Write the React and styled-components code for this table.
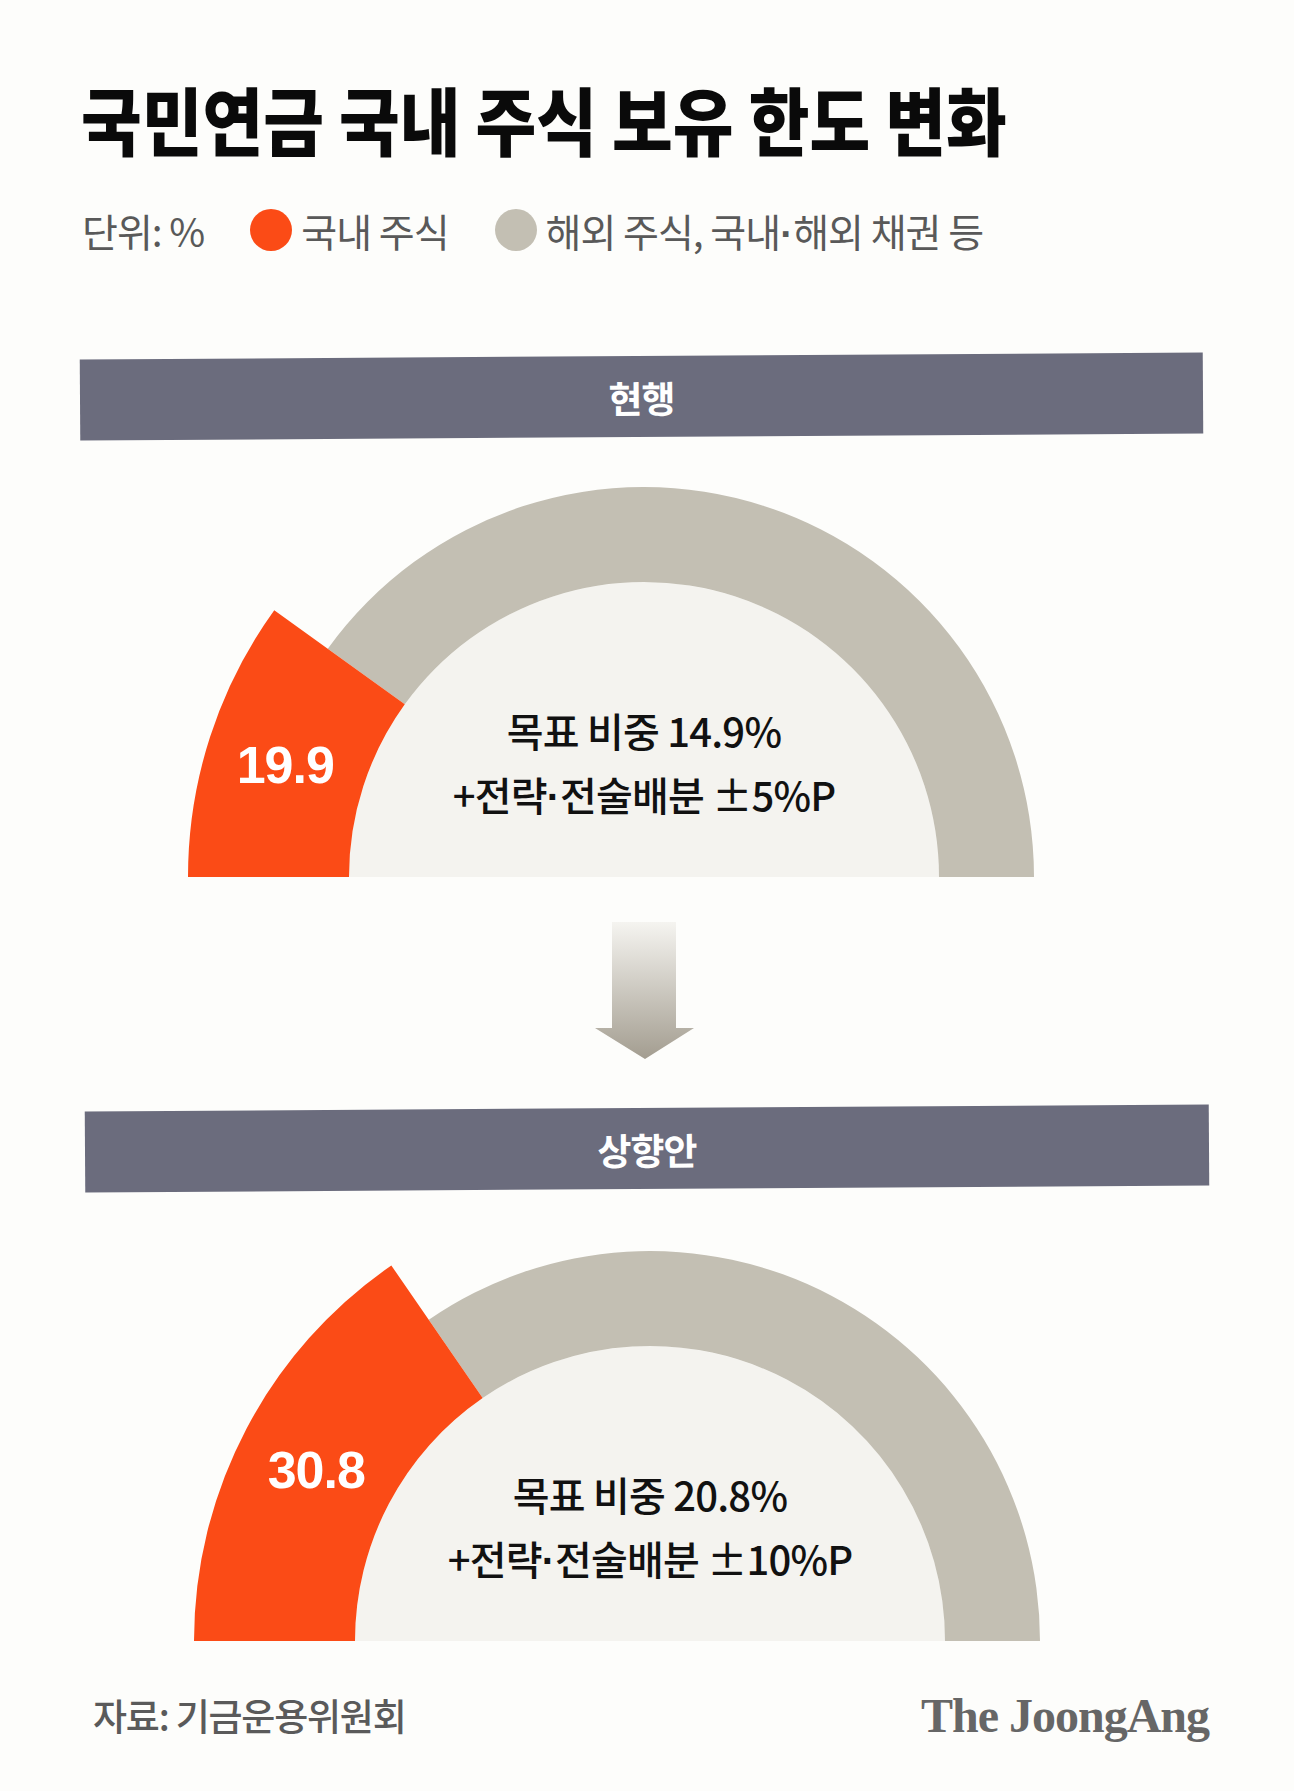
import React from 'react';
import styled, { createGlobalStyle } from 'styled-components';

const GlobalStyle = createGlobalStyle`
  html, body {
    margin: 0;
    padding: 0;
    background: #fdfdfb;
  }
  * {
    box-sizing: border-box;
  }
`;

const KR = `"Noto Sans CJK KR", "Noto Sans", sans-serif`;

const Page = styled.div`
  width: 1294px;
  height: 1791px;
  background: #fdfdfb;
  padding-top: 78px;
  font-family: ${KR};
  overflow: hidden;
`;
const Title = styled.h1`
  margin: 0 0 0 81px;
  height: 80px;
  line-height: 80px;
  font-size: 66px;
  font-weight: 900;
  letter-spacing: 0;
  color: #0a0a0a;
  transform: scaleY(1.12);
  transform-origin: 0 50%;
  white-space: nowrap;
`;
const Legend = styled.div`
  display: flex;
  align-items: center;
  gap: 46px;
  height: 42px;
  margin: 51px 0 0 82px;
  font-size: 39px;
  letter-spacing: -1px;
  color: #595959;
  white-space: nowrap;
`;
const LegendItem = styled.div`
  display: flex;
  align-items: center;
  gap: 9px;
`;
const Dot = styled.span`
  width: 42px;
  height: 42px;
  border-radius: 50%;
  background: ${p => p.$color};
`;
// narrow middle dot, the CJK one is full width
const Mid = styled.span`
  font-family: "Liberation Sans", Arial, sans-serif;
  font-weight: 700;
  letter-spacing: 0;
`;
const Band = styled.div`
  display: flex;
  align-items: center;
  justify-content: center;
  width: ${p => p.$width}px;
  height: 81px;
  margin: ${p => p.$top}px 0 0 ${p => p.$left}px;
  background: #6b6c7d;
  color: #ffffff;
  font-size: 37px;
  font-weight: 700;
  letter-spacing: -1px;
  transform: rotate(-0.36deg);
`;
const GaugeWrap = styled.div`
  position: relative;
  width: 1294px;
  height: 400px;
  margin-top: ${p => p.$top}px;
  svg {
    display: block;
  }
`;
const Caption = styled.div`
  position: absolute;
  top: 216px;
  transform: translateX(-50%);
  text-align: center;
  font-size: 40px;
  line-height: 64px;
  font-weight: 500;
  letter-spacing: -0.8px;
  color: #111111;
  white-space: nowrap;
`;
const ArrowWrap = styled.div`
  margin: 40px 0 0 595px;
  width: 100px;
  height: 137px;
  svg {
    display: block;
  }
`;
const Footer = styled.div`
  display: flex;
  align-items: center;
  justify-content: space-between;
  height: 50px;
  margin-top: 44px;
  padding: 0 85px 0 93px;
`;
const Source = styled.div`
  font-size: 37px;
  font-weight: 500;
  letter-spacing: -1.2px;
  color: #5a5a5a;
`;
const Logo = styled.div`
  font-family: "Liberation Serif", "DejaVu Serif", serif;
  font-size: 48px;
  font-weight: 700;
  letter-spacing: -1px;
  color: #666666;
`;

const ORANGE = '#fb4b16';
const GRAY = '#c3bfb3';
const INNER = '#f4f3ef';

const R_IN = 295;
const R_RING = 390;
const R_SLICE = 456;
const CY = 395;

const Gauge = ({ value, target, band, cx, top }) => {
  const a = Math.PI * value / 100;
  const pt = (r, ang) => `${(cx - r * Math.cos(ang)).toFixed(2)},${(CY - r * Math.sin(ang)).toFixed(2)}`;
  const slice = `M${pt(R_IN, 0)} L${pt(R_SLICE, 0)} A${R_SLICE},${R_SLICE} 0 0 1 ${pt(R_SLICE, a)} L${pt(R_IN, a)} A${R_IN},${R_IN} 0 0 0 ${pt(R_IN, 0)} Z`;
  const ring = `M${pt(R_IN, a)} L${pt(R_RING, a)} A${R_RING},${R_RING} 0 0 1 ${pt(R_RING, Math.PI)} L${pt(R_IN, Math.PI)} A${R_IN},${R_IN} 0 0 0 ${pt(R_IN, a)} Z`;
  const inner = `M${cx - R_IN},${CY} A${R_IN},${R_IN} 0 0 1 ${cx + R_IN},${CY} Z`;
  const lx = cx - 377 * Math.cos(a / 2);
  const ly = CY - 377 * Math.sin(a / 2) + 4;
  return (
    <GaugeWrap $top={top}>
      <svg width="1294" height="400" viewBox="0 0 1294 400">
        <path d={inner} fill={INNER} />
        <path d={ring} fill={GRAY} />
        <path d={slice} fill={ORANGE} />
        <text
          x={lx}
          y={ly}
          textAnchor="middle"
          dominantBaseline="central"
          fill="#ffffff"
          fontFamily='"Liberation Sans", Arial, sans-serif'
          fontWeight="700"
          fontSize="52"
          letterSpacing="-1"
        >
          {value}
        </text>
      </svg>
      <Caption style={{ left: cx }}>
        <div>목표 비중 {target}%</div>
        <div>+전략<Mid>·</Mid>전술배분 ±{band}%P</div>
      </Caption>
    </GaugeWrap>
  );
};

const Arrow = () => (
  <ArrowWrap>
    <svg width="100" height="137" viewBox="0 0 100 137">
      <defs>
        <linearGradient id="arrowFill" x1="0" y1="0" x2="0" y2="1">
          <stop offset="0" stopColor="#f5f4f0" />
          <stop offset="1" stopColor="#a39d90" />
        </linearGradient>
      </defs>
      <path d="M17,0 H81 V106 H99 L50,137 L0,106 H17 Z" fill="url(#arrowFill)" />
    </svg>
  </ArrowWrap>
);

export default function App() {
  return (
    <Page>
      <GlobalStyle />
      <Title>국민연금 국내 주식 보유 한도 변화</Title>
      <Legend>
        <span>단위: %</span>
        <LegendItem>
          <Dot $color={ORANGE} />
          <span>국내 주식</span>
        </LegendItem>
        <LegendItem>
          <Dot $color={GRAY} />
          <span>해외 주식, 국내<Mid>·</Mid>해외 채권 등</span>
        </LegendItem>
      </Legend>
      <Band $top={105} $left={80} $width={1123}>현행</Band>
      <Gauge value={19.9} target={14.9} band={5} cx={644} top={45} />
      <Arrow />
      <Band $top={49} $left={85} $width={1124}>상향안</Band>
      <Gauge value={30.8} target={20.8} band={10} cx={650} top={57} />
      <Footer>
        <Source>자료: 기금운용위원회</Source>
        <Logo>The JoongAng</Logo>
      </Footer>
    </Page>
  );
}
